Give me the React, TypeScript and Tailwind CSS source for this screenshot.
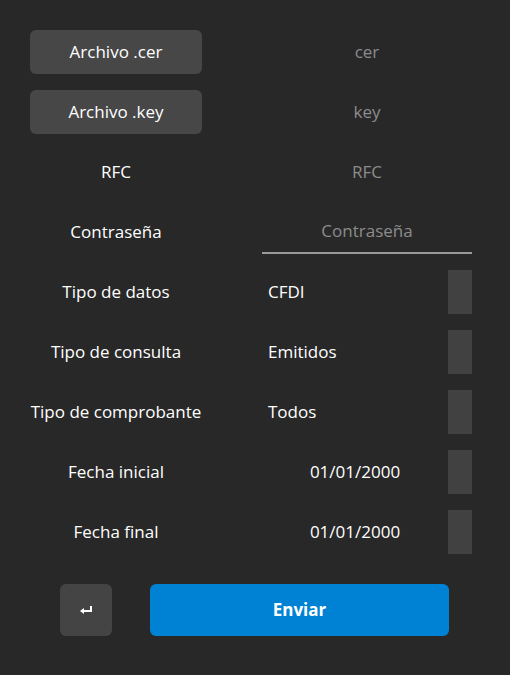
import React from "react";

const font = { fontFamily: '"Open Sans", "Noto Sans", sans-serif' };

function Label({ children }: { children: React.ReactNode }) {
  return <div className="flex h-[44px] items-center justify-center text-[17px] text-white">{children}</div>;
}

function Placeholder({ children }: { children: React.ReactNode }) {
  return <div className="flex h-[44px] items-center justify-center text-[17px] text-[#8c8c8c]">{children}</div>;
}

function Combo({ value, center }: { value: string; center?: boolean }) {
  return (
    <div className="flex h-[44px] items-stretch">
      <div className={"flex flex-1 items-center text-[17px] text-white " + (center ? "justify-center" : "pl-[6px]")}>
        {value}
      </div>
      <div className="w-[24px] bg-[#414141]" />
    </div>
  );
}

export default function App() {
  return (
    <div className="min-h-[675px] w-[510px] bg-[#282828] pt-[30px]" style={font}>
      <div className="grid grid-cols-[172px_210px] gap-x-[60px] gap-y-[16px] pl-[30px]">
        <button className="h-[44px] rounded-[6px] bg-[#474747] text-[17px] text-white">Archivo .cer</button>
        <Placeholder>cer</Placeholder>
        <button className="h-[44px] rounded-[6px] bg-[#474747] text-[17px] text-white">Archivo .key</button>
        <Placeholder>key</Placeholder>
        <Label>RFC</Label>
        <Placeholder>RFC</Placeholder>
        <Label>Contraseña</Label>
        <div className="flex h-[44px] items-center justify-center border-b-2 border-[#9a9a9a] text-[17px] text-[#8c8c8c]">
          Contraseña
        </div>
        <Label>Tipo de datos</Label>
        <Combo value="CFDI" />
        <Label>Tipo de consulta</Label>
        <Combo value="Emitidos" />
        <Label>Tipo de comprobante</Label>
        <Combo value="Todos" />
        <Label>Fecha inicial</Label>
        <Combo value="01/01/2000" center />
        <Label>Fecha final</Label>
        <Combo value="01/01/2000" center />
      </div>
      <div className="mt-[30px] flex items-center gap-[38px] pl-[60px]">
        <button className="flex h-[52px] w-[52px] items-center justify-center rounded-[6px] bg-[#444444]">
          <svg width="14" height="10" viewBox="0 0 14 10" fill="none">
            <path d="M12 1v5H3" stroke="white" strokeWidth="2" />
            <path d="M1 6l4-3v6z" fill="white" />
          </svg>
        </button>
        <button className="h-[52px] w-[299px] rounded-[6px] bg-[#0082d4] text-[17px] font-bold text-white">Enviar</button>
      </div>
    </div>
  );
}
